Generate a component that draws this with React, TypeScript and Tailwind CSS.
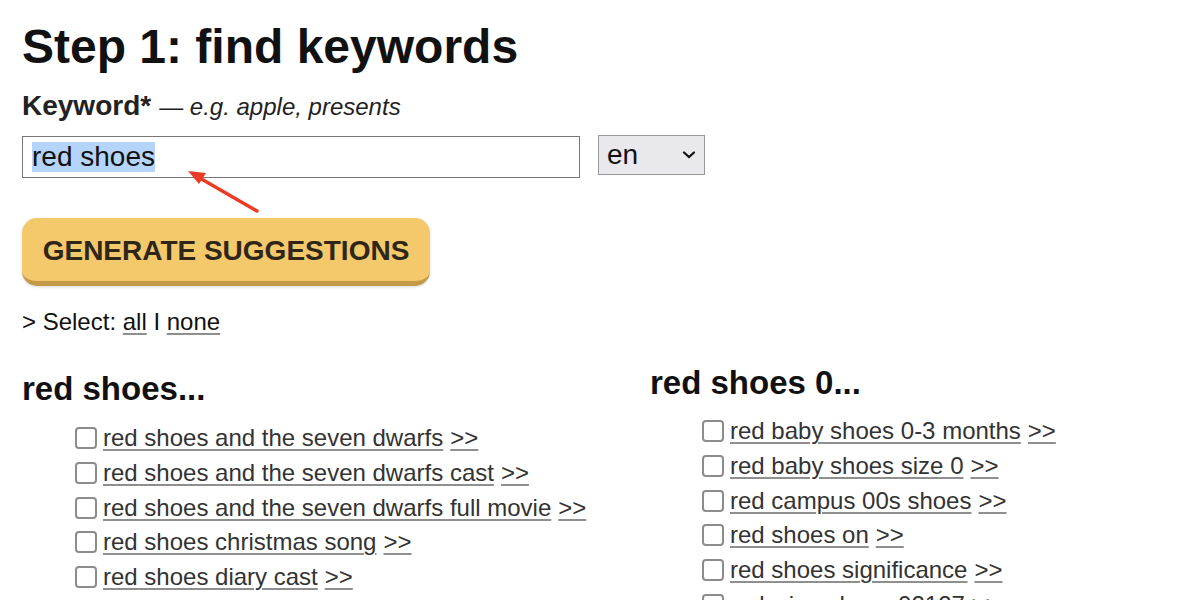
import React from "react";

const leftItems = [
  "red shoes and the seven dwarfs",
  "red shoes and the seven dwarfs cast",
  "red shoes and the seven dwarfs full movie",
  "red shoes christmas song",
  "red shoes diary cast",
  "red shoes diary cast",
];

const rightItems = [
  "red baby shoes 0-3 months",
  "red baby shoes size 0",
  "red campus 00s shoes",
  "red shoes on",
  "red shoes significance",
  "red wing shoes 02127",
];

const Item = ({ text }: { text: string }) => (
  <li className="flex items-center h-[34.7px]">
    <span className="w-[22px] h-[22px] rounded-[4px] border-[2.5px] border-[#8c8c8c] bg-white mr-[6px] shrink-0" />
    <a className="underline decoration-[#8f8f8f] underline-offset-[3px] decoration-[1.5px] text-[#333]">
      {text}
    </a>
    <a className="ml-[7px] underline decoration-[#8f8f8f] underline-offset-[3px] decoration-[1.5px] text-[#333]">
      &gt;&gt;
    </a>
  </li>
);

export default function App() {
  return (
    <div className="relative w-[1200px] h-[600px] overflow-hidden bg-white text-[#111] font-['Liberation_Sans',Arial,sans-serif]">
      <div className="pl-[22px]">
        <h1 className="pt-[23px] text-[48px] leading-[48px] font-bold text-[#111]">
          Step 1: find keywords
        </h1>
        <div className="mt-[21px] flex items-baseline h-[28px] leading-[28px]">
          <span className="text-[28px] font-bold text-[#222]">Keyword*</span>
          <span className="ml-[8px] text-[24px] italic text-[#222]">— e.g. apple, presents</span>
        </div>
        <div className="mt-[16px] flex items-start">
          <div className="w-[558px] h-[42px] border border-[#777] flex items-center px-[9px]">
            <span className="text-[28px] leading-[30px] bg-[#b5d4fb] text-[#111]">red shoes</span>
          </div>
          <div className="ml-[18px] -mt-[1px] w-[107px] h-[40px] border border-[#999] bg-[#e9e9ed] flex items-center justify-between px-[8px]">
            <span className="text-[28px] text-[#111]">en</span>
            <svg width="14" height="10" viewBox="0 0 14 10">
              <path d="M2 2.5 L7 7 L12 2.5" fill="none" stroke="#111" strokeWidth="2.2" strokeLinecap="round" />
            </svg>
          </div>
        </div>
        <button className="mt-[40px] w-[408px] h-[68px] rounded-[15px] bg-[#f3c96c] border-b-[5px] border-[#c49a48] text-[#2f2618] font-bold text-[28px] flex items-center justify-center pt-[3px] shadow-[0_1px_3px_rgba(0,0,0,0.15)]">
          GENERATE SUGGESTIONS
        </button>
        <div className="mt-[24px] text-[24px] leading-[24px] text-[#111]">
          &gt; Select: <a className="underline decoration-[#8f8f8f] underline-offset-[3px]">all</a> I{" "}
          <a className="underline decoration-[#8f8f8f] underline-offset-[3px]">none</a>
        </div>
      </div>
      <div className="flex pl-[22px] mt-[30px]">
        <div className="w-[628px] pt-[8px]">
          <h2 className="text-[33px] leading-[33px] font-bold text-[#111]">red shoes...</h2>
          <ul className="mt-[16px] pl-[53px] text-[24px]">
            {leftItems.map((t, i) => (
              <Item key={i} text={t} />
            ))}
          </ul>
        </div>
        <div className="pt-[2px]">
          <h2 className="text-[33px] leading-[33px] font-bold text-[#111]">red shoes 0...</h2>
          <ul className="mt-[15px] pl-[52px] text-[24px]">
            {rightItems.map((t, i) => (
              <Item key={i} text={t} />
            ))}
          </ul>
        </div>
      </div>
      <svg className="absolute left-0 top-0 pointer-events-none" width="1200" height="600">
        <line x1="257" y1="211" x2="198" y2="177" stroke="#ec3b24" strokeWidth="3.5" strokeLinecap="round" />
        <path d="M188 171 L206 173 L199 184 Z" fill="#ec3b24" />
      </svg>
    </div>
  );
}
